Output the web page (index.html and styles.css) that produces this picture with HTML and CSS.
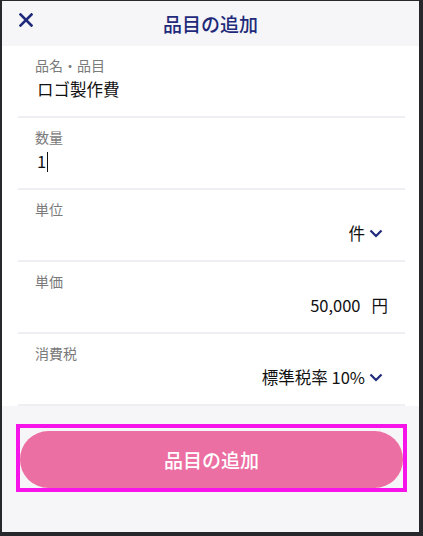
FILE: index.html
```html
<!DOCTYPE html>
<html lang="ja">
<head>
  <meta charset="UTF-8">
  <title>品目の追加</title>
  <link rel="stylesheet" href="styles.css">
</head>
<body>

  <div class="screen">
    <header class="header">
      <button class="close-btn" aria-label="閉じる">
        <svg width="14" height="14" viewBox="0 0 14 14">
          <path d="M1.5 1.5 L12.5 12.5 M12.5 1.5 L1.5 12.5" stroke="#1f2a7a" stroke-width="2.6" stroke-linecap="square" fill="none"/>
        </svg>
      </button>
      <h1 class="title">品目の追加</h1>
    </header>

    <div class="form">
      <div class="row">
        <div class="label">品名・品目</div>
        <div class="value">ロゴ製作費</div>
      </div>

      <div class="row">
        <div class="label">数量</div>
        <div class="value">1<span class="caret"></span></div>
      </div>

      <div class="row">
        <div class="label">単位</div>
        <div class="value right select">
          件
          <svg class="chevron" width="14" height="9" viewBox="0 0 14 9">
            <path d="M1.5 1.5 L7 7 L12.5 1.5" stroke="#1f2a7a" stroke-width="2.2" fill="none"/>
          </svg>
        </div>
      </div>

      <div class="row">
        <div class="label">単価</div>
        <div class="value right price">50,000<span class="unit">円</span></div>
      </div>

      <div class="row">
        <div class="label">消費税</div>
        <div class="value right select">
          標準税率 10%
          <svg class="chevron" width="14" height="9" viewBox="0 0 14 9">
            <path d="M1.5 1.5 L7 7 L12.5 1.5" stroke="#1f2a7a" stroke-width="2.2" fill="none"/>
          </svg>
        </div>
      </div>
    </div>

    <div class="footer">
      <div class="focus-ring">
        <button class="add-btn">品目の追加</button>
      </div>
    </div>
  </div>

</body>
</html>
```

FILE: styles.css
```css
body {
  margin: 0;
  background: #26282c;
  font-family: "Noto Sans CJK JP", "Noto Sans", sans-serif;
}

.screen {
  margin: 1px 4px 4px 2px;
  height: 531px;
  background: #f6f6f8;
  display: flex;
  flex-direction: column;
}

.header {
  height: 45px;
  display: flex;
  align-items: center;
  justify-content: center;
  position: relative;
}

.close-btn {
  position: absolute;
  left: 17px;
  top: 12px;
  padding: 0;
  border: none;
  background: none;
  width: 14px;
  height: 14px;
}

.title {
  margin: 0;
  font-size: 19px;
  font-weight: 500;
  color: #1f2a7a;
  line-height: 44px;
}

.form {
  background: #fff;
  padding: 0 14px 0 16px;
}

.row {
  height: 61px;
  padding: 9px 0 0 17px;
  border-bottom: 2px solid #eeeff2;
}

.label {
  font-size: 14px;
  line-height: 20px;
  color: #7a7a7a;
}

.value {
  margin-top: 2px;
  font-size: 16.5px;
  line-height: 24px;
  color: #111;
  padding-left: 2px;
}

.caret {
  display: inline-block;
  width: 1px;
  height: 20px;
  background: #111;
  vertical-align: -4px;
  margin-left: 1px;
}

.right {
  display: flex;
  justify-content: flex-end;
  align-items: center;
  padding-right: 22px;
}

.select {
  gap: 4px;
}

.chevron {
  margin-top: 1px;
}

.price {
  padding-right: 17px;
}

.unit {
  margin-left: 11px;
}

.footer {
  flex: 1;
  padding: 18px 12px 0 14px;
}

.focus-ring {
  border: 4px solid #f714ea;
  padding: 3px 0 0 0;
}

.add-btn {
  display: block;
  width: 100%;
  height: 57px;
  margin: 0;
  border: none;
  border-radius: 29px;
  background: #ec6fa3;
  color: #fff;
  font-family: "Noto Sans CJK JP", "Noto Sans", sans-serif;
  font-size: 19px;
  font-weight: 500;
  cursor: pointer;
}
```
